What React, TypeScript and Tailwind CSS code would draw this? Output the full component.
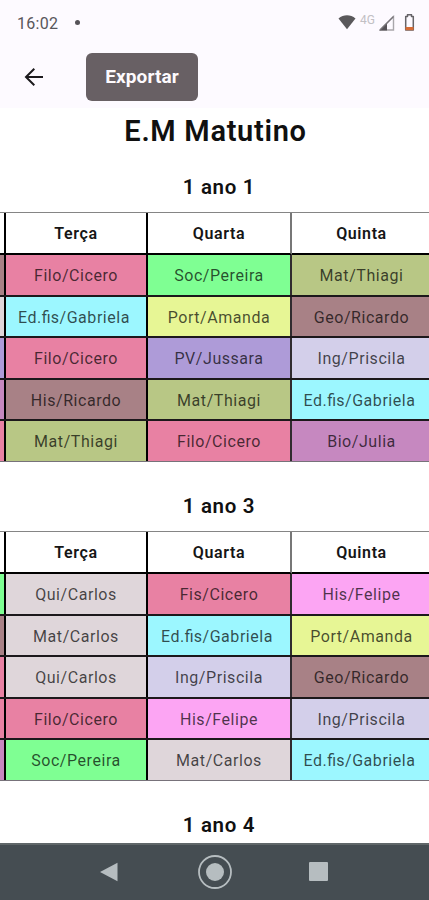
import React from "react";

const fills: Record<string, string> = {
  "Filo/Cicero": "bg-[#e881a3]",
  "Fis/Cicero": "bg-[#e881a3]",
  "Soc/Pereira": "bg-[#7fff93]",
  "Mat/Thiagi": "bg-[#b8c785]",
  "Ed.fis/Gabriela": "bg-[#9cf7ff]",
  "Port/Amanda": "bg-[#e7f695]",
  "Geo/Ricardo": "bg-[#a88186]",
  "His/Ricardo": "bg-[#a88186]",
  "PV/Jussara": "bg-[#ae9bd8]",
  "Ing/Priscila": "bg-[#d3cfea]",
  "Bio/Julia": "bg-[#c688c0]",
  "Qui/Carlos": "bg-[#dfd6da]",
  "Mat/Carlos": "bg-[#dfd6da]",
  "His/Felipe": "bg-[#fca5f3]",
};

type Row = { edge: string; cells: string[] };

const first: Row[] = [
  { edge: "bg-[#a88186]", cells: ["Filo/Cicero", "Soc/Pereira", "Mat/Thiagi"] },
  { edge: "bg-[#dfd6da]", cells: ["Ed.fis/Gabriela", "Port/Amanda", "Geo/Ricardo"] },
  { edge: "bg-[#ae9bd8]", cells: ["Filo/Cicero", "PV/Jussara", "Ing/Priscila"] },
  { edge: "bg-[#c688c0]", cells: ["His/Ricardo", "Mat/Thiagi", "Ed.fis/Gabriela"] },
  { edge: "bg-[#e881a3]", cells: ["Mat/Thiagi", "Filo/Cicero", "Bio/Julia"] },
];

const second: Row[] = [
  { edge: "bg-[#7fff93]", cells: ["Qui/Carlos", "Fis/Cicero", "His/Felipe"] },
  { edge: "bg-[#a88186]", cells: ["Mat/Carlos", "Ed.fis/Gabriela", "Port/Amanda"] },
  { edge: "bg-[#e881a3]", cells: ["Qui/Carlos", "Ing/Priscila", "Geo/Ricardo"] },
  { edge: "bg-[#e881a3]", cells: ["Filo/Cicero", "His/Felipe", "Ing/Priscila"] },
  { edge: "bg-[#c688c0]", cells: ["Soc/Pereira", "Mat/Carlos", "Ed.fis/Gabriela"] },
];

const columns = "grid grid-cols-[6px_142px_144px_137px]";
const dividers = ["border-r-2 border-black", "border-r-2 border-[#302b2f]", ""];

// Keeps the "fi" pair unspaced so that the font joins it into a ligature.
function CellText({ text }: { text: string }) {
  const at = text.indexOf("fi");
  if (at < 0) return <span>{text}</span>;
  return (
    <span className="mr-[4px]">
      {text.slice(0, at)}
      <span className="tracking-normal">fi</span>
      {text.slice(at + 2)}
    </span>
  );
}

function Timetable({ rows }: { rows: Row[] }) {
  return (
    <div className="h-[250px] w-full shrink-0 border-t border-[#858585]">
      <div className={`${columns} h-[42px]`}>
        <div className="border-r-2 border-b-2 border-black" />
        {["Terça", "Quarta", "Quinta"].map((day, i) => (
          <div
            key={day}
            className={`flex items-center justify-center border-b-2 border-b-black pt-[2px] text-[16px] font-semibold tracking-[0.6px] text-[#161616] ${
              i === 0 ? "border-r-2 border-r-black" : i === 1 ? "border-r-2 border-r-[#777777]" : "pl-[2px]"
            }`}
          >
            {day}
          </div>
        ))}
      </div>
      {rows.map((row, r) => (
        <div
          key={r}
          className={`${columns} ${r === 4 ? "h-[41px] border-b border-[#77727a]" : "h-[41.5px] border-b-2 border-[#1c181b]"}`}
        >
          <div className={`border-r-2 border-black ${row.edge}`} />
          {row.cells.map((cell, i) => (
            <div
              key={i}
              className={`flex items-center justify-center pt-[2.5px] text-[16px] tracking-[0.55px] whitespace-nowrap text-black/70 ${fills[cell]} ${dividers[i]} ${i === 2 ? "pl-[2px]" : ""}`}
            >
              <CellText text={cell} />
            </div>
          ))}
        </div>
      ))}
    </div>
  );
}

function StatusBar() {
  return (
    <div className="flex h-[45px] items-center bg-[#fdfaff] pr-[14px] pl-[17px]">
      <span className="pt-[2px] text-[16px] tracking-[0.3px] text-[#58565a]">16:02</span>
      <span className="ml-[17px] size-[5px] rounded-full bg-[#555257]" />
      <svg className="ml-auto -mt-[2px]" width="18" height="16" viewBox="0 0 18 16">
        <path d="M.5 4.5C5.5.1 12.5.1 17.5 4.5L9 15.3Z" fill="#5a585b" />
      </svg>
      <span className="ml-[4px] -mt-[6px] text-[12px] text-[#c2c0c4]">4G</span>
      <svg className="ml-[4px]" width="16" height="16" viewBox="0 0 16 16">
        <path d="M1 15H14.5V1.5Z" fill="#fdfaff" stroke="#a9a7ab" strokeWidth="1.4" />
        <path d="M.5 15.5H8V8Z" fill="#555257" />
        <path d="M1 15L14.5 1.5" stroke="#777478" strokeWidth="1.2" />
      </svg>
      <svg className="ml-[9px] -mt-px" width="11" height="17" viewBox="0 0 11 17">
        <path d="M3.5 0.7h4v1.8h1.8V16H1.7V2.5h1.8Z" fill="#fdfaff" stroke="#666468" strokeWidth="1.5" strokeLinejoin="round" />
        <path d="M1.5 13h8v3.2h-8Z" fill="#d66b35" />
      </svg>
    </div>
  );
}

export default function App() {
  return (
    <div className="flex h-[900px] w-[429px] flex-col overflow-hidden bg-white font-[Roboto,sans-serif]">
      <StatusBar />
      <header className="flex h-[63px] items-center bg-[#fdfaff] pl-[24px]">
        <svg width="20" height="20" viewBox="0 0 20 20" fill="none" stroke="#1c1a1d" strokeWidth="2">
          <path d="M19 10H2.5M10.3 1.8L2 10L10.3 18.2" />
        </svg>
        <button className="ml-[42px] flex h-[48px] w-[112px] items-center justify-center rounded-[6px] bg-[#686064] pt-[2px] text-[19px] font-bold tracking-[0.1px] text-[#fdfafd]">
          Exportar
        </button>
      </header>
      <main className="flex min-h-0 flex-1 flex-col items-center overflow-hidden text-[#101010]">
        <h1 className="flex h-[46px] shrink-0 items-center pt-[2px] pl-[2px] text-[29px] font-semibold tracking-[0.7px]">E.M Matutino</h1>
        <h2 className="flex h-[58px] shrink-0 items-center pt-[8px] pl-[9px] text-[20.5px] font-semibold tracking-[0.7px]">1 ano 1</h2>
        <Timetable rows={first} />
        <h2 className="flex h-[69px] shrink-0 items-center pt-[20px] pl-[9px] text-[20.5px] font-semibold tracking-[0.7px]">1 ano 3</h2>
        <Timetable rows={second} />
        <h2 className="flex h-[69px] shrink-0 items-center pt-[20px] pl-[9px] text-[20.5px] font-semibold tracking-[0.7px]">1 ano 4</h2>
      </main>
      <nav className="flex h-[57px] shrink-0 items-center border-t-2 border-[#606769] bg-[#454d52] pb-[2px] pl-[99px]">
        <svg width="20" height="20" viewBox="0 0 20 20">
          <path d="M1 10L18.5 .8V19.2Z" fill="#b6bdc0" />
        </svg>
        <svg className="ml-[78px]" width="36" height="36" viewBox="0 0 36 36" fill="none">
          <circle cx="18" cy="18" r="16" stroke="#b6bdc0" strokeWidth="1.8" />
          <circle cx="18" cy="18" r="9" fill="#b6bdc0" />
        </svg>
        <div className="ml-[76px] size-[19px] rounded-[1px] bg-[#b6bdc0]" />
      </nav>
    </div>
  );
}
